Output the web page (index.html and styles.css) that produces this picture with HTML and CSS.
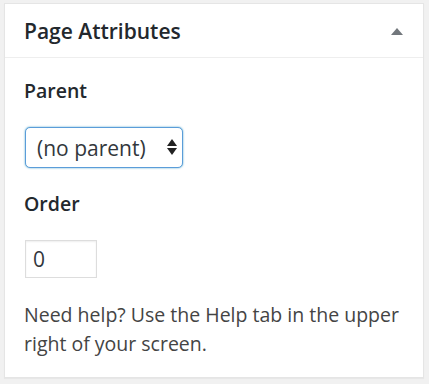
FILE: index.html
```html
<!DOCTYPE html>
<html lang="en">
<head>
    <meta charset="UTF-8">
    <meta name="viewport" content="width=device-width, initial-scale=1.0">
    <title>Page Attributes</title>
    <link rel="stylesheet" href="styles.css">
</head>
<body>

    <!-- Page Attributes box -->
    <div class="postbox">
        <div class="postbox-header">
            <h2 class="hndle">Page Attributes</h2>
            <span class="toggle-indicator"></span>
        </div>
        <div class="inside">
            <p class="attr-label">Parent</p>
            <div class="select-wrap">
                <select class="parent-select">
                    <option>(no parent)</option>
                </select>
                <span class="select-arrows"></span>
            </div>
            <p class="attr-label">Order</p>
            <input type="text" class="order-input" value="0">
            <p class="help">Need help? Use the Help tab in the upper right of your screen.</p>
        </div>
    </div>

</body>
</html>
```

FILE: styles.css
```css
body {
    margin: 0;
    padding: 3px 5px 6px 4px;
    background-color: #f1f1f1;
    font-family: "Open Sans", "Liberation Sans", sans-serif;
    color: #444;
}

/* Box */
.postbox {
    background: #fff;
    border: 1px solid #e5e5e5;
    box-shadow: 0 1px 1px rgba(0, 0, 0, 0.04);
}
.postbox-header {
    display: flex;
    justify-content: space-between;
    align-items: center;
    height: 53px;
    padding: 0 20px 0 19px;
    border-bottom: 1px solid #eee;
}
.hndle {
    margin: 0;
    font-size: 21px;
    font-weight: 600;
    color: #23282d;
}
.toggle-indicator {
    width: 0;
    height: 0;
    border-left: 6px solid transparent;
    border-right: 6px solid transparent;
    border-bottom: 7px solid #72777c;
    margin-top: 2px;
}

/* Content */
.inside {
    padding: 20px 19px 18px 19px;
}
.attr-label {
    margin: 0 0 23px 0;
    font-size: 19.5px;
    line-height: 26px;
    font-weight: 600;
    color: #23282d;
}
.select-wrap {
    position: relative;
    width: 158px;
    margin: 0 0 23px 1px;
}
.parent-select {
    -webkit-appearance: none;
    appearance: none;
    display: block;
    width: 158px;
    height: 41px;
    padding: 0 0 0 11px;
    border: 1px solid #5b9dd9;
    border-radius: 5px;
    box-shadow: 0 0 2px rgba(30, 140, 190, 0.8);
    background: #fff;
    font-family: inherit;
    font-size: 21px;
    color: #32373c;
    outline: none;
}
.select-arrows {
    position: absolute;
    right: 6px;
    top: 12px;
    width: 0;
    height: 0;
    border-left: 5px solid transparent;
    border-right: 5px solid transparent;
    border-bottom: 7px solid #222;
}
.select-arrows::after {
    content: "";
    position: absolute;
    left: -5px;
    top: 9px;
    border-left: 5px solid transparent;
    border-right: 5px solid transparent;
    border-top: 7px solid #222;
}
.order-input {
    display: block;
    box-sizing: border-box;
    width: 72px;
    height: 38px;
    margin: 0 0 0 1px;
    padding: 0 7px;
    border: 1px solid #ddd;
    box-shadow: inset 0 1px 2px rgba(0, 0, 0, 0.07);
    font-family: inherit;
    font-size: 21px;
    color: #32373c;
    outline: none;
}
.help {
    margin: 22px 0 0 0;
    font-size: 19.5px;
    line-height: 1.5;
}
```
